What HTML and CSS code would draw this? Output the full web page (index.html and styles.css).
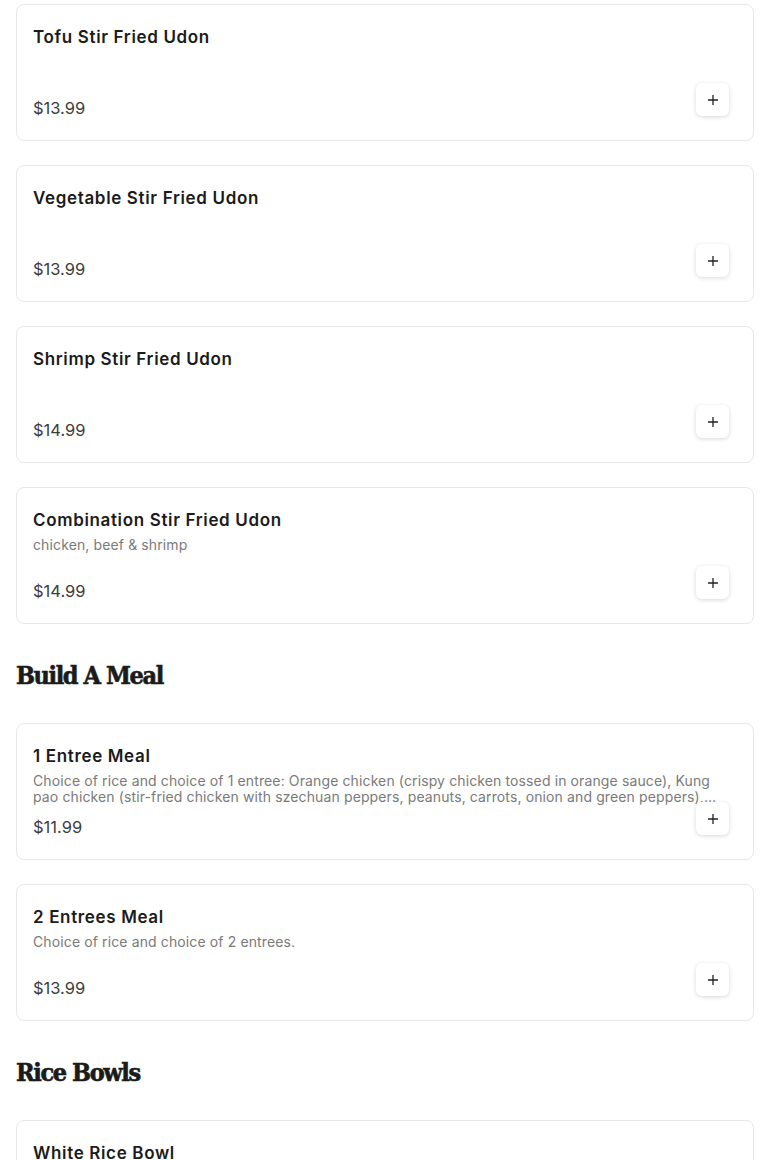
FILE: index.html
```html
<!DOCTYPE html>
<html>
<head>
<meta charset="utf-8">
<link rel="stylesheet" href="styles.css">
</head>
<body>
<div class="menu">
  <div class="list">
    <div class="card">
      <div class="title">Tofu Stir Fried Udon</div>
      <div class="desc"></div>
      <div class="row"><span class="price">$13.99</span><button class="add"><svg width="12" height="12" viewBox="0 0 12 12"><path d="M6 1v10M1 6h10" stroke="#222" stroke-width="1.3"/></svg></button></div>
    </div>
    <div class="card">
      <div class="title">Vegetable Stir Fried Udon</div>
      <div class="desc"></div>
      <div class="row"><span class="price">$13.99</span><button class="add"><svg width="12" height="12" viewBox="0 0 12 12"><path d="M6 1v10M1 6h10" stroke="#222" stroke-width="1.3"/></svg></button></div>
    </div>
    <div class="card">
      <div class="title">Shrimp Stir Fried Udon</div>
      <div class="desc"></div>
      <div class="row"><span class="price">$14.99</span><button class="add"><svg width="12" height="12" viewBox="0 0 12 12"><path d="M6 1v10M1 6h10" stroke="#222" stroke-width="1.3"/></svg></button></div>
    </div>
    <div class="card">
      <div class="title">Combination Stir Fried Udon</div>
      <div class="desc">chicken, beef &amp; shrimp</div>
      <div class="row"><span class="price">$14.99</span><button class="add"><svg width="12" height="12" viewBox="0 0 12 12"><path d="M6 1v10M1 6h10" stroke="#222" stroke-width="1.3"/></svg></button></div>
    </div>
  </div>

  <h2 class="section">Build A Meal</h2>
  <div class="list">
    <div class="card">
      <div class="title">1 Entree Meal</div>
      <div class="desc">Choice of rice and choice of 1 entree: Orange chicken (crispy chicken tossed in orange sauce), Kung pao chicken (stir-fried chicken with szechuan peppers, peanuts, carrots, onion and green peppers), Broccoli beef (stir-fried beef with broccoli in brown sauce).</div>
      <div class="row"><span class="price">$11.99</span><button class="add"><svg width="12" height="12" viewBox="0 0 12 12"><path d="M6 1v10M1 6h10" stroke="#222" stroke-width="1.3"/></svg></button></div>
    </div>
    <div class="card">
      <div class="title">2 Entrees Meal</div>
      <div class="desc">Choice of rice and choice of 2 entrees.</div>
      <div class="row"><span class="price">$13.99</span><button class="add"><svg width="12" height="12" viewBox="0 0 12 12"><path d="M6 1v10M1 6h10" stroke="#222" stroke-width="1.3"/></svg></button></div>
    </div>
  </div>

  <h2 class="section">Rice Bowls</h2>
  <div class="list">
    <div class="card">
      <div class="title">White Rice Bowl</div>
      <div class="desc"></div>
      <div class="row"><span class="price">$3.99</span><button class="add"><svg width="12" height="12" viewBox="0 0 12 12"><path d="M6 1v10M1 6h10" stroke="#222" stroke-width="1.3"/></svg></button></div>
    </div>
  </div>
</div>
</body>
</html>
```
FILE: styles.css
```css
* { box-sizing: border-box; }
html, body { margin: 0; padding: 0; background: #fff; }
body { font-family: Inter, "Noto Sans", sans-serif; color: #1b1b1b; }
.menu { padding: 4px 16px 40px; }
.list { display: flex; flex-direction: column; gap: 24px; }
.card {
  border: 1px solid #e8e8e8;
  border-radius: 8px;
  padding: 21px 16px 20px 16px;
  display: flex;
  flex-direction: column;
  background: #fff;
}
.title { font-size: 17px; font-weight: 600; line-height: 22px; color: #1b1b1b; letter-spacing: 0.65px; }
.desc {
  margin-top: 6px;
  height: 32px;
  font-size: 14px;
  line-height: 16px;
  color: #7a7a7a;
  letter-spacing: 0.12px;
  display: -webkit-box;
  -webkit-line-clamp: 2;
  -webkit-box-orient: vertical;
  overflow: hidden;
}
.row { margin-top: 10px; display: flex; justify-content: space-between; align-items: flex-end; height: 24px; }
.price { font-size: 16.5px; line-height: 24px; color: #3d3d3d; }
.add {
  width: 33px; height: 33px;
  margin-right: 8px; margin-bottom: 4px;
  border: none; border-radius: 6px; background: #fff;
  box-shadow: 0 1px 4px rgba(0,0,0,0.16);
  display: flex; align-items: center; justify-content: center;
  padding: 0; cursor: pointer;
}
.section {
  margin: 34px 0 29px;
  font-family: "DejaVu Serif Condensed", "DejaVu Serif", serif;
  font-weight: bold;
  font-size: 25px;
  letter-spacing: -1.4px;
  -webkit-text-stroke: 0.6px #1b1b1b;
  line-height: 36px;
  color: #1b1b1b;
}
```
